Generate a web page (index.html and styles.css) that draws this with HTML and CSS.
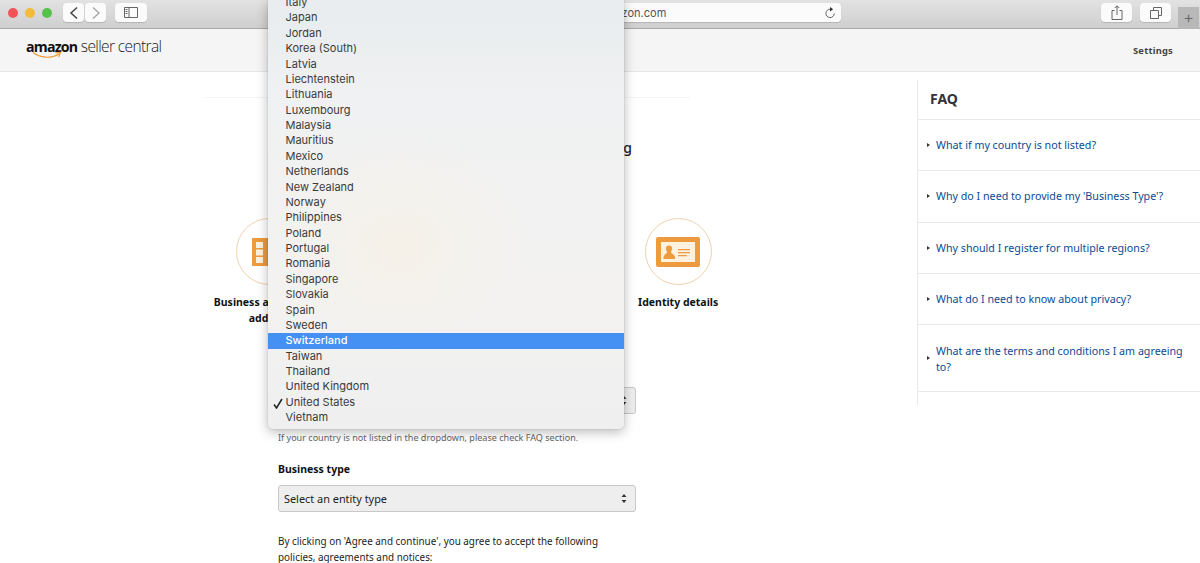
FILE: index.html
```html
<!DOCTYPE html>
<html lang="en">
<head>
<meta charset="utf-8">
<title>Amazon Seller Central</title>
<link rel="stylesheet" href="styles.css">
</head>
<body>
<div class="toolbar">
  <div class="lights"><i class="light red"></i><i class="light amber"></i><i class="light green"></i></div>
  <div class="nav-group">
    <div class="tbtn nav"><svg width="12" height="14" viewBox="0 0 12 14"><path d="M9 1.500 3 7l6 5.500" class="ic dark"/></svg></div>
    <div class="tbtn nav"><svg width="12" height="14" viewBox="0 0 12 14"><path d="m3 1.500 6 5.500-6 5.500" class="ic light-ic"/></svg></div>
  </div>
  <div class="tbtn side"><svg width="14" height="11" viewBox="0 0 14 11"><path d="M.5.5h13v10H.500zM5 .5v10M1.500 2.500h2M1.500 4.500h2M1.500 6.500h2" class="ic thin"/></svg></div>
  <div class="url"><span>sellercentral.amazon.com</span><svg class="reload" width="12" height="12" viewBox="0 0 12 12"><path d="M6.500 2.200A4.200 4.200 0 1 0 10.300 6.500" class="ic thin"/><path d="M6 0l3.200 2.200L6 4.400z" class="fill-dark"/></svg></div>
  <div class="tbtn tool first"><svg width="12" height="15" viewBox="0 0 12 15"><path d="M3.500 5.500H1v9h10v-9H8.500M6 10V1M3.800 3 6 .8 8.200 3" class="ic thin"/></svg></div>
  <div class="tbtn tool"><svg width="12" height="12" viewBox="0 0 12 12"><path d="M3.500 3V.5h8v8H8.500M.5 3.500h8v8h-8z" class="ic thin"/></svg></div>
  <div class="newtab">+</div>
</div>

<header class="site-header">
  <div class="logo">
    <span class="logo-a">amazon</span><span class="logo-b">seller central</span>
    <svg class="smile" width="30" height="9" viewBox="0 0 30 9"><path d="M1 1.500C8 7 19 8 27 3" class="smile-line"/><path d="m23.500 1.800 5 -.3-1.800 4.500" class="smile-line thin-line"/></svg>
  </div>
  <a class="settings">Settings</a>
</header>

<div class="page">
  <main class="content">
    <div class="card">
      <h1 class="title">Information needed for registering</h1>
      <div class="steps">
        <div class="step">
          <div class="ring"><svg width="40" height="32" viewBox="0 0 40 32"><path d="M3 2h32v28H3z" class="fill-o"/><path d="M7 6h7v6H7zM7 13.500h7v6H7zM7 21h7v6H7z" class="fill-w"/></svg></div>
          <div class="step-label">Business and contact address</div>
        </div>
        <div class="step">
          <div class="ring"></div>
          <div class="step-label">Seller information</div>
        </div>
        <div class="step">
          <div class="ring"></div>
          <div class="step-label">Billing details</div>
        </div>
        <div class="step">
          <div class="ring"><svg width="46" height="32" viewBox="0 0 46 32"><rect x="1" y="1" width="44" height="30" rx="2" class="fill-o"/><path d="M6 6h34v20H6z" class="fill-w"/><path d="M14 9.500a3 3 0 0 1 3 3c0 2-1 3-1 4 0 1 4 2 4 5v1.500H8.500V21.500c0-3 3.500-4 3.500-5 0-1-1-2-1-4a3 3 0 0 1 3-3zM23 13h12v1.300H23zM23 16h12v1.300H23zM23 19h9v1.300h-9z" class="fill-o"/></svg></div>
          <div class="step-label">Identity details</div>
        </div>
      </div>
      <form class="form">
        <div class="field-label">Business location</div>
        <div class="select"><span>United States</span><svg width="6" height="9" viewBox="0 0 6 9"><path d="M3 0l2.500 3H.500zM3 9 .500 6h5z" class="fill-dark"/></svg></div>
        <p class="hint">If your country is not listed in the dropdown, please check FAQ section.</p>
        <div class="field-label type">Business type</div>
        <div class="select"><span>Select an entity type</span><svg width="6" height="9" viewBox="0 0 6 9"><path d="M3 0l2.500 3H.500zM3 9 .500 6h5z" class="fill-dark"/></svg></div>
        <p class="terms">By clicking on 'Agree and continue', you agree to accept the following policies, agreements and notices:</p>
      </form>
    </div>
  </main>

  <aside class="faq">
    <h2 class="faq-title">FAQ</h2>
    <a class="faq-row">What if my country is not listed?</a>
    <a class="faq-row">Why do I need to provide my 'Business Type'?</a>
    <a class="faq-row">Why should I register for multiple regions?</a>
    <a class="faq-row">What do I need to know about privacy?</a>
    <a class="faq-row tall">What are the terms and conditions I am agreeing to?</a>
  </aside>
</div>

<div class="menu">
  <div class="mi">Italy</div>
  <div class="mi">Japan</div>
  <div class="mi">Jordan</div>
  <div class="mi">Korea (South)</div>
  <div class="mi">Latvia</div>
  <div class="mi">Liechtenstein</div>
  <div class="mi">Lithuania</div>
  <div class="mi">Luxembourg</div>
  <div class="mi">Malaysia</div>
  <div class="mi">Mauritius</div>
  <div class="mi">Mexico</div>
  <div class="mi">Netherlands</div>
  <div class="mi">New Zealand</div>
  <div class="mi">Norway</div>
  <div class="mi">Philippines</div>
  <div class="mi">Poland</div>
  <div class="mi">Portugal</div>
  <div class="mi">Romania</div>
  <div class="mi">Singapore</div>
  <div class="mi">Slovakia</div>
  <div class="mi">Spain</div>
  <div class="mi">Sweden</div>
  <div class="mi selected">Switzerland</div>
  <div class="mi">Taiwan</div>
  <div class="mi">Thailand</div>
  <div class="mi">United Kingdom</div>
  <div class="mi checked"><svg class="check" width="10" height="11" viewBox="0 0 10 11"><path d="M1 6.500 3.500 10 9 1" class="check-line"/></svg>United States</div>
  <div class="mi">Vietnam</div>
</div>
</body>
</html>
```
FILE: styles.css
```css
* { box-sizing: border-box; }
html, body { margin: 0; height: 563px; overflow: hidden; background: #fff; }
body { font-family: "Noto Sans", "Open Sans", sans-serif; color: #111; position: relative; }

.toolbar { height: 29px; display: flex; align-items: flex-start; padding-top: 3px; background: linear-gradient(#e2e2e2, #cfcfcf); border-bottom: 1px solid #a9a9a9; position: relative; }
.lights { display: flex; gap: 7px; margin: 5px 0 0 8px; }
.light { display: block; width: 10px; height: 10px; border-radius: 50%; }
.red { background: #f0555a; }
.amber { background: #f5bb3a; }
.green { background: #56c24a; }
.tbtn { height: 19px; background: #fbfbfb; border-radius: 4px; display: flex; align-items: center; justify-content: center; box-shadow: 0 1px 1px #b5b5b5; }
.nav-group { display: flex; gap: 1px; margin-left: 11px; }
.nav { width: 21px; }
.side { width: 32px; margin-left: 9px; }
.url { position: absolute; left: 358px; top: 3px; width: 483px; height: 19px; background: #fbfbfb; border-radius: 4px; box-shadow: 0 1px 1px #b5b5b5; display: flex; align-items: center; justify-content: center; font-size: 11px; color: #555; font-family: "Inter", sans-serif; }
.reload { position: absolute; right: 5px; top: 4px; }
.tool { width: 31px; margin-left: 8px; }
.first { margin-left: auto; }
.newtab { width: 21px; height: 22px; margin: 4px 1px 0 7px; background: #b8b8b8; color: #666; font-size: 17px; line-height: 21px; text-align: center; font-family: "Inter", sans-serif; font-weight: 300; }
.ic { fill: none; stroke: #555; stroke-width: 1.300; }
.ic.dark { stroke: #444; stroke-width: 1.500; }
.ic.light-ic { stroke: #aaa; stroke-width: 1.500; }
.ic.thin { stroke-width: 1; stroke: #666; }
.fill-dark { fill: #333; }

.site-header { height: 43px; background: #f5f5f5; border-bottom: 1px solid #e6e6e6; display: flex; align-items: center; justify-content: space-between; padding: 0 27px 0 26px; }
.logo { position: relative; display: flex; align-items: baseline; margin-top: -9px; color: #222; }
.logo-a { font-family: "Open Sans", sans-serif; font-weight: 700; font-size: 14.200px; letter-spacing: -.8px; color: #111; }
.logo-b { font-family: "Open Sans", sans-serif; font-weight: 300; font-size: 15.500px; letter-spacing: -.62px; margin-left: 3.500px; }
.smile { position: absolute; left: 6px; top: 16px; }
.smile-line { fill: none; stroke: #ec9c3c; stroke-width: 1.200; }
.settings { font-size: 9.400px; font-weight: 700; color: #444; letter-spacing: .2px; margin-top: 1px; }

.page { display: flex; height: 491px; align-items: flex-start; }
.content { width: 917px; padding: 25px 227px 0 205px; }
.card { border-top: 1px solid #f4f4f4; height: 470px; display: flex; flex-direction: column; }
.title { margin: 40px 58px 0 0; font-size: 14px; line-height: 20px; font-weight: 500; color: #222; text-align: right; }
.steps { display: grid; grid-template-columns: repeat(4, 136.330px); margin: 60px 0 0 -4px; }
.step { display: flex; flex-direction: column; align-items: center; }
.ring { width: 67px; height: 67px; border: 1px solid #f0d3ae; border-radius: 50%; display: flex; align-items: center; justify-content: center; }
.step-label { margin-top: 9px; width: 116px; text-align: center; font-size: 10.500px; font-weight: 700; line-height: 16px; color: #111; }
.fill-o { fill: #ee9a3e; fill-rule: evenodd; }
.fill-w { fill: #fdf1e0; }

.form { margin: 0 0 0 73px; width: 358px; position: relative; top: -7px; }
.field-label { font-size: 10.500px; font-weight: 700; line-height: 16px; color: #111; margin-top: 47px; margin-bottom: 5px; }
.select { height: 27px; border: 1px solid #c8c8c8; border-radius: 3px; background: #eeeeee; display: flex; align-items: center; justify-content: space-between; padding: 0 8px 1px 5px; font-size: 10.900px; color: #222; }
.hint { margin: 17px 0 0; font-size: 9.050px; line-height: 14px; color: #666; }
.field-label.type { margin-top: 16px; margin-bottom: 8px; }
.terms { margin: 21px 0 0; width: 335px; font-size: 9.900px; line-height: 16px; color: #222; }

.faq { width: 283px; margin-top: 8px; margin-right: 0; border-left: 1px solid #e8e8e8; height: 325px; }
.faq-title { margin: 0; height: 40px; padding: 9px 0 0 12px; font-size: 14px; line-height: 20px; font-weight: 700; color: #333; border-bottom: 1px solid #eaeaea; }
.faq-row { display: flex; align-items: center; height: 51.300px; padding: 0 12px 0 18px; font-size: 10.700px; line-height: 16px; color: #0b4a96; border-bottom: 1px solid #eaeaea; position: relative; }
.faq-row::before { content: ""; position: absolute; left: 9px; top: 50%; margin-top: -2px; border-left: 3px solid #333; border-top: 2px solid transparent; border-bottom: 2px solid transparent; }
.faq-row.tall { height: 67px; padding-top: 1px; }

.menu { position: absolute; left: 268px; top: 0; width: 356px; height: 429px; overflow: hidden; display: flex; flex-direction: column; justify-content: flex-end; padding-bottom: 3.500px; border-radius: 0 0 5px 5px; background: radial-gradient(ellipse 130px 110px at 130px 245px, #f5f1e8, transparent), linear-gradient(#e8ecee 0, #f0f1f2 100px, #f3f2f1 300px, #efefef 100%); box-shadow: 0 3px 12px rgba(0,0,0,.28), 0 0 1px rgba(0,0,0,.4); font-family: "Inter", "Liberation Sans", sans-serif; font-size: 11px; letter-spacing: 0; color: #3a3a3a; }
.mi { flex: none; height: 15.380px; line-height: 15.380px; padding-left: 17.500px; position: relative; white-space: nowrap; }
.selected { background: #4490f3; color: #fff; font-weight: 500; }
.check { position: absolute; left: 5px; top: 3px; }
.check-line { fill: none; stroke: #222; stroke-width: 1.500; }
```
